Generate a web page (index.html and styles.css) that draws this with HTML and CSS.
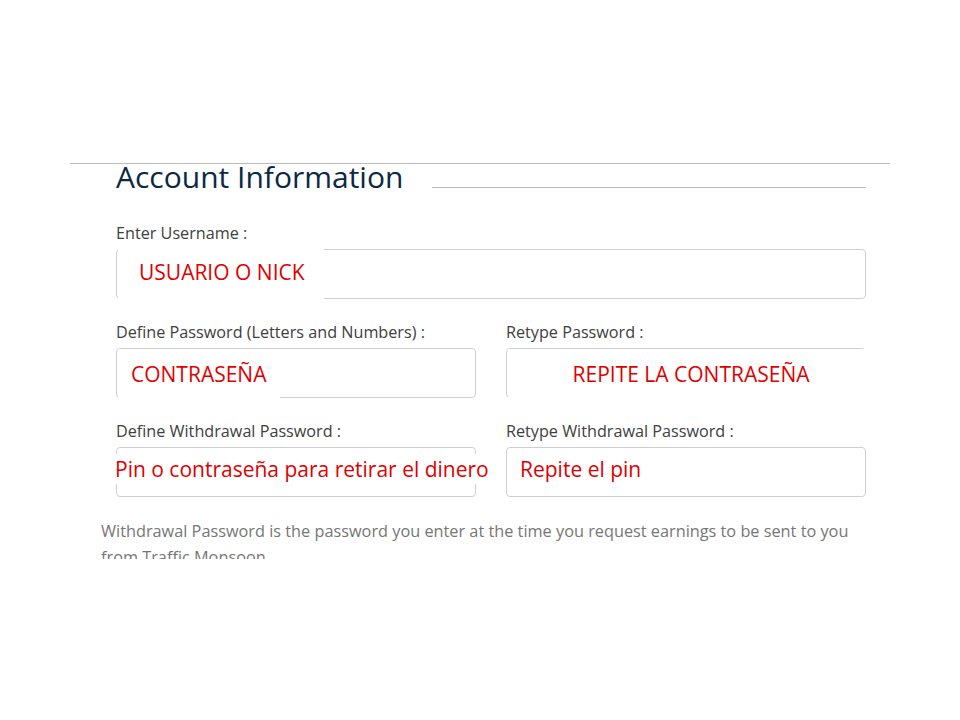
FILE: index.html
```html
<!DOCTYPE html>
<html lang="en">
<head>
<meta charset="utf-8">
<title>Account Information</title>
<link rel="stylesheet" href="styles.css">
</head>
<body>
<div class="page">
  <section class="panel">
    <div class="heading-row">
      <h2 class="heading">Account Information</h2>
      <span class="heading-rule"></span>
    </div>
    <div class="form">
      <div class="field">
        <label class="label">Enter Username :</label>
        <div class="input"><span class="note note-user">USUARIO O NICK</span></div>
      </div>
      <div class="row">
        <div class="field">
          <label class="label">Define Password (Letters and Numbers) :</label>
          <div class="input"><span class="note note-pass">CONTRASEÑA</span></div>
        </div>
        <div class="field">
          <label class="label">Retype Password :</label>
          <div class="input"><span class="note note-repass">REPITE LA CONTRASEÑA</span></div>
        </div>
      </div>
      <div class="row">
        <div class="field">
          <label class="label">Define Withdrawal Password :</label>
          <div class="input"><span class="note note-pin">Pin o contraseña para retirar el dinero</span></div>
        </div>
        <div class="field">
          <label class="label">Retype Withdrawal Password :</label>
          <div class="input"><span class="note note-repin">Repite el pin</span></div>
        </div>
      </div>
    </div>
    <div class="help-clip">
      <p class="help">Withdrawal Password is the password you enter at the time you request earnings to be sent to you from Traffic Monsoon.</p>
    </div>
  </section>
</div>
</body>
</html>
```
FILE: styles.css
```css
html, body {
  margin: 0;
  padding: 0;
  background: #ffffff;
}
body {
  font-family: "Open Sans", "Liberation Sans", sans-serif;
  width: 960px;
  height: 720px;
  overflow: hidden;
}
.page {
  padding-top: 163px;
  padding-left: 70px;
}
.panel {
  width: 820px;
  border-top: 1px solid #bcbcbc;
  box-sizing: border-box;
  padding-left: 31px;
}
.heading-row {
  display: flex;
  align-items: flex-start;
  padding-left: 15px;
  width: 750px;
}
.heading {
  margin: 0;
  font-weight: 400;
  font-size: 30px;
  line-height: 26px;
  color: #0c2944;
}
.heading-rule {
  flex: 1;
  height: 1px;
  background: #b8b8b8;
  margin-left: 29px;
  margin-top: 23px;
}
.form {
  width: 750px;
  padding-left: 15px;
  margin-top: 33px;
}
.row {
  display: grid;
  grid-template-columns: 360px 360px;
  column-gap: 30px;
}
.field {
  margin-bottom: 23px;
}
.label {
  display: block;
  font-size: 16.2px;
  line-height: 20px;
  color: #404040;
  margin-bottom: 6px;
}
.input {
  position: relative;
  height: 50px;
  box-sizing: border-box;
  border: 1px solid #cfcfcf;
  border-radius: 4px;
  background: #fff;
}
.note {
  position: absolute;
  display: flex;
  align-items: center;
  background: #fff;
  color: #e00000;
  font-size: 21px;
  white-space: nowrap;
}
.note-user {
  left: 1px;
  top: -1px;
  bottom: -1px;
  width: 185px;
  padding-left: 21px;
  padding-bottom: 4px;
}
.note-pass {
  left: 1px;
  top: 0;
  bottom: -1px;
  width: 149px;
  padding-left: 13px;
  padding-top: 1px;
}
.note-repass {
  left: 1px;
  right: -1px;
  top: 0;
  bottom: -1px;
  justify-content: center;
  padding-left: 8px;
  padding-top: 1px;
}
.note-pin {
  left: -2px;
  top: 6px;
  height: 30px;
}
.note-repin {
  left: 13px;
  top: 6px;
  height: 30px;
}
.help-clip {
  margin-top: -2px;
  height: 41px;
  overflow: hidden;
}
.help {
  margin: 0;
  font-size: 16.3px;
  line-height: 26px;
  color: #767676;
  width: 770px;
}
```
